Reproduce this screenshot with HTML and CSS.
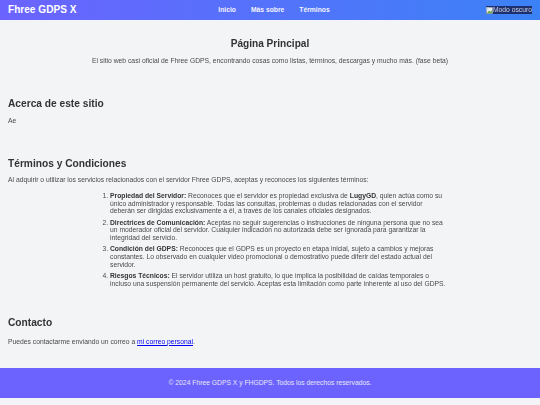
FILE: index.html
```html
<!DOCTYPE html>
<html lang="es">
<head>
<meta charset="utf-8">
<title>Fhree GDPS X</title>
<link rel="stylesheet" href="styles.css">
</head>
<body>
<header class="topbar">
  <a class="brand" href="#">Fhree GDPS X</a>
  <nav class="nav">
    <a href="#">Inicio</a>
    <a href="#">Más sobre</a>
    <a href="#">Términos</a>
  </nav>
  <button class="theme" type="button">
    <svg class="broken" viewBox="0 0 8 8" width="7" height="7" aria-hidden="true">
      <rect x="0.5" y="0.5" width="7" height="7" fill="#e8eef2" stroke="#9aa3aa" stroke-width="0.6"/>
      <path d="M1 7 L3.5 4 L5 5.5 L7 3.5 V7 Z" fill="#6aa84f"/>
      <path d="M0.5 0.5 H4 L0.5 4 Z" fill="#b7d3ee"/>
    </svg><span>Modo oscuro</span>
  </button>
</header>
<main class="page">
  <section class="hero">
    <h1>Página Principal</h1>
    <p>El sitio web casi oficial de Fhree GDPS, encontrando cosas como listas, términos, descargas y mucho más. (fase beta)</p>
  </section>
  <section class="block about">
    <h2>Acerca de este sitio</h2>
    <p>Ae</p>
  </section>
  <section class="block terms">
    <h2>Términos y Condiciones</h2>
    <p>Al adquirir o utilizar los servicios relacionados con el servidor Fhree GDPS, aceptas y reconoces los siguientes términos:</p>
    <ol>
      <li><strong>Propiedad del Servidor:</strong> Reconoces que el servidor es propiedad exclusiva de <strong>LugyGD</strong>, quien actúa como su único administrador y responsable. Todas las consultas, problemas o dudas relacionadas con el servidor deberán ser dirigidas exclusivamente a él, a través de los canales oficiales designados.</li>
      <li><strong>Directrices de Comunicación:</strong> Aceptas no seguir sugerencias o instrucciones de ninguna persona que no sea un moderador oficial del servidor. Cualquier indicación no autorizada debe ser ignorada para garantizar la integridad del servicio.</li>
      <li><strong>Condición del GDPS:</strong> Reconoces que el GDPS es un proyecto en etapa inicial, sujeto a cambios y mejoras constantes. Lo observado en cualquier video promocional o demostrativo puede diferir del estado actual del servidor.</li>
      <li><strong>Riesgos Técnicos:</strong> El servidor utiliza un host gratuito, lo que implica la posibilidad de caídas temporales o incluso una suspensión permanente del servicio. Aceptas esta limitación como parte inherente al uso del GDPS.</li>
    </ol>
  </section>
  <section class="block contact">
    <h2>Contacto</h2>
    <p>Puedes contactarme enviando un correo a <a href="#">mi correo personal</a>.</p>
  </section>
</main>
<footer class="foot">© 2024 Fhree GDPS X y FHGDPS. Todos los derechos reservados.</footer>
</body>
</html>
```
FILE: styles.css
```css
* { box-sizing: border-box; }
html, body { margin: 0; padding: 0; }
body {
  width: 540px;
  height: 405px;
  overflow: hidden;
  background: #f3f4f6;
  color: #4a4a4a;
  font-family: "Liberation Sans", Arial, sans-serif;
  font-size: 6.75px;
  line-height: 7.75px;
  filter: blur(0.35px);
}
.topbar {
  display: grid;
  grid-template-columns: 1fr auto 1fr;
  align-items: center;
  height: 20px;
  padding: 0 8px;
  background: linear-gradient(90deg, #6c63ff, #3b82f6);
  color: #fff;
}
.brand { color: #fff; font-size: 10.1px; font-weight: 700; text-decoration: none; }
.nav { display: flex; gap: 15px; margin-left: 8px; }
.nav a { color: #f4f4ff; font-weight: 700; font-size: 6.75px; text-decoration: none; }
.theme {
  justify-self: end;
  display: flex;
  align-items: center;
  padding: 0;
  border: 0;
  background: #1e2f6e;
  color: #c9d2e8;
  font: inherit;
  font-size: 6.75px;
}
.page { padding: 0 8px; }
.hero { text-align: center; padding-top: 16.5px; }
h1 { margin: 0; font-size: 10.1px; line-height: 13px; color: #333; }
.hero p { margin: 7px 0 0; }
h2 { margin: 0; font-size: 10.2px; line-height: 13px; color: #333; }
strong { color: #333; }
.block p { margin: 6.5px 0 0; }
.about { margin-top: 33px; }
.terms { margin-top: 32px; }
.contact { margin-top: 28.5px; }
.contact p { margin-top: 8.5px; }
ol { width: 351px; margin: 8px auto 0; padding: 0 0 0 15.5px; }
li { margin-bottom: 3.5px; }
a { color: #0000ee; }
.foot {
  display: flex;
  align-items: center;
  justify-content: center;
  position: absolute;
  top: 368px;
  left: 0;
  width: 540px;
  height: 29.5px;
  background: #6c63ff;
  color: #e6e6f5;
}
```
